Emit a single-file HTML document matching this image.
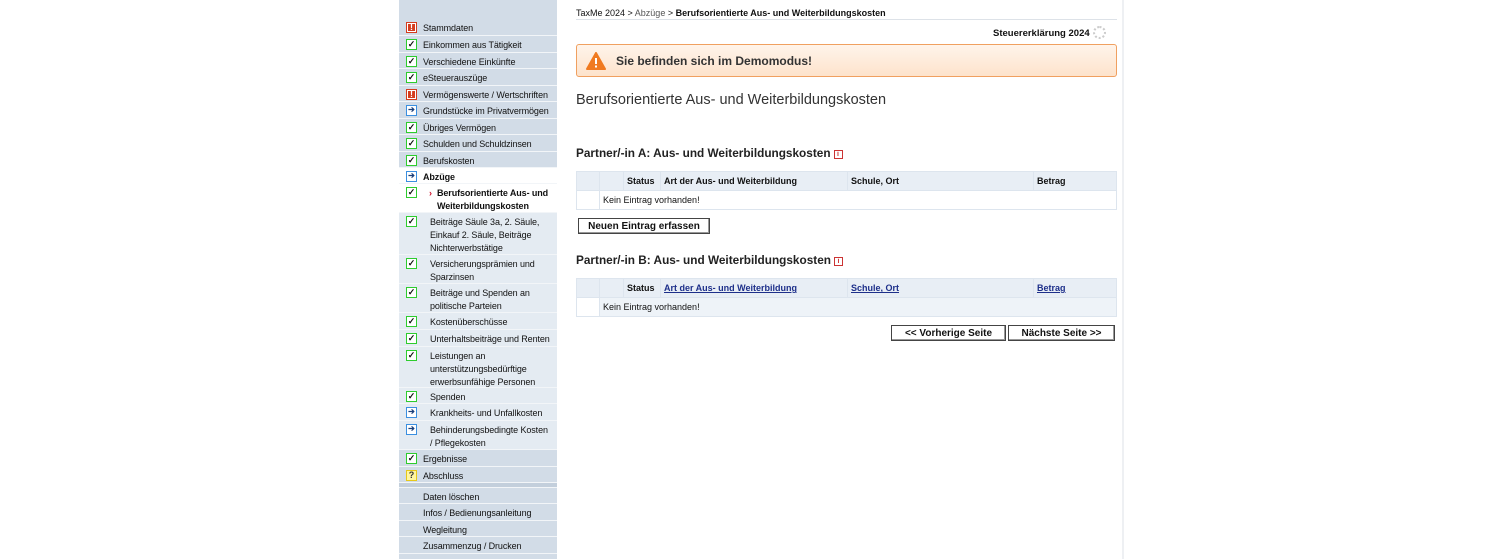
<!DOCTYPE html>
<html><head><meta charset="utf-8"><style>
*{margin:0;padding:0;box-sizing:border-box}
body{width:1505px;height:559px;background:#fff;font-family:"Liberation Sans",Arial,sans-serif;position:relative;overflow:hidden;color:#111}
#side{position:absolute;left:399px;top:0;width:158px;height:559px;background:#d2dce7}
.r{position:absolute;left:0;width:158px;font-size:9px;line-height:13px;border-bottom:1px solid #f2f5f8}
.r .t{position:absolute;left:24px;top:3px;white-space:nowrap;letter-spacing:-0.1px}
.s .t{left:31px}
.s{background:#e4ebf2}
.w{background:#fff}
.ic{position:absolute;left:7px;top:3px;width:11px;height:11px;border:1.5px solid;font-size:9px;line-height:8px;text-align:center;font-weight:bold;background:#fff}
.g{border-color:#2ecc2e;color:#111}
.e{border-color:#d43c1e;color:#fff;background:#d43c1e;box-shadow:inset 0 0 0 1px #fff}
.b{border-color:#3b8fe0;color:#1a3f7a;font-size:8px}
.y{border-color:#e6c81a;background:#fff6a0;color:#333}
#main{position:absolute;left:557px;top:0;width:567px;height:559px;border-right:2px solid #eef0f3}
.bc{position:absolute;left:19px;top:8px;font-size:9px}
.ln{position:absolute;left:19px;top:19px;width:541px;border-top:1px solid #dde2e8}
.h1{position:absolute;left:19px;top:92px;font-size:14.5px;color:#333}
.h2{position:absolute;left:19px;font-size:11.8px;font-weight:bold;color:#222}
.inf{display:inline-block;width:9px;height:9px;border:1px solid #c33;color:#c33;font-size:7px;line-height:7px;text-align:center;vertical-align:1px;margin-left:3px}
table{position:absolute;left:19px;width:541px;border-collapse:collapse;font-size:9px}
td{border:1px solid #dde5ee;height:19px;padding:0 3px}
tr.hd td{background:#e8eef5;font-weight:bold;height:19px}
a{color:#1d2f8a;text-decoration:underline}
.btn{position:absolute;height:16px;border:1px solid #444;box-shadow:inset -1px -1px #999;background:#fff;font-size:10px;font-weight:bold;text-align:center;line-height:15px}
</style></head><body>
<div id="side">
<div class="r" style="top:0;height:19px;border:0"></div>
<div class="r" style="top:19px;height:17px"><span class="ic e">!</span><span class="t">Stammdaten</span></div>
<div class="r" style="top:36px;height:17px"><span class="ic g">✓</span><span class="t">Einkommen aus Tätigkeit</span></div>
<div class="r" style="top:53px;height:16px"><span class="ic g">✓</span><span class="t">Verschiedene Einkünfte</span></div>
<div class="r" style="top:69px;height:17px"><span class="ic g">✓</span><span class="t">eSteuerauszüge</span></div>
<div class="r" style="top:86px;height:16px"><span class="ic e">!</span><span class="t">Vermögenswerte / Wertschriften</span></div>
<div class="r" style="top:102px;height:17px"><span class="ic b">➔</span><span class="t">Grundstücke im Privatvermögen</span></div>
<div class="r" style="top:119px;height:16px"><span class="ic g">✓</span><span class="t">Übriges Vermögen</span></div>
<div class="r" style="top:135px;height:17px"><span class="ic g">✓</span><span class="t">Schulden und Schuldzinsen</span></div>
<div class="r" style="top:152px;height:16px"><span class="ic g">✓</span><span class="t">Berufskosten</span></div>
<div class="r w" style="top:168px;height:16px"><span class="ic b">➔</span><span class="t" style="font-weight:bold">Abzüge</span></div>
<div class="r s w" style="top:184px;height:29px"><span class="ic g">✓</span><span class="t" style="font-weight:bold;padding-left:8px;left:30px"><span style="color:#d0102a;position:absolute;left:0">›</span>Berufsorientierte Aus- und<br>Weiterbildungskosten</span></div>
<div class="r s" style="top:213px;height:42px"><span class="ic g">✓</span><span class="t">Beiträge Säule 3a, 2. Säule,<br>Einkauf 2. Säule, Beiträge<br>Nichterwerbstätige</span></div>
<div class="r s" style="top:255px;height:29px"><span class="ic g">✓</span><span class="t">Versicherungsprämien und<br>Sparzinsen</span></div>
<div class="r s" style="top:284px;height:29px"><span class="ic g">✓</span><span class="t">Beiträge und Spenden an<br>politische Parteien</span></div>
<div class="r s" style="top:313px;height:17px"><span class="ic g">✓</span><span class="t">Kostenüberschüsse</span></div>
<div class="r s" style="top:330px;height:17px"><span class="ic g">✓</span><span class="t">Unterhaltsbeiträge und Renten</span></div>
<div class="r s" style="top:347px;height:41px"><span class="ic g">✓</span><span class="t">Leistungen an<br>unterstützungsbedürftige<br>erwerbsunfähige Personen</span></div>
<div class="r s" style="top:388px;height:16px"><span class="ic g">✓</span><span class="t">Spenden</span></div>
<div class="r s" style="top:404px;height:17px"><span class="ic b">➔</span><span class="t">Krankheits- und Unfallkosten</span></div>
<div class="r s" style="top:421px;height:29px"><span class="ic b">➔</span><span class="t">Behinderungsbedingte Kosten<br>/ Pflegekosten</span></div>
<div class="r" style="top:450px;height:17px"><span class="ic g">✓</span><span class="t">Ergebnisse</span></div>
<div class="r" style="top:467px;height:16px"><span class="ic y">?</span><span class="t">Abschluss</span></div>
<div class="r" style="top:483px;height:5px;background:#c3cfdc"></div>
<div class="r" style="top:488px;height:16px"><span class="t">Daten löschen</span></div>
<div class="r" style="top:504px;height:17px"><span class="t">Infos / Bedienungsanleitung</span></div>
<div class="r" style="top:521px;height:16px"><span class="t">Wegleitung</span></div>
<div class="r" style="top:537px;height:17px"><span class="t">Zusammenzug / Drucken</span></div>
</div>
<div id="main">
<div class="bc">TaxMe 2024 &gt; <span style="color:#555">Abzüge</span> &gt; <b>Berufsorientierte Aus- und Weiterbildungskosten</b></div>
<div class="ln"></div>
<div style="position:absolute;left:436px;top:28px;font-size:9.5px;font-weight:bold">Steuererklärung 2024</div>
<div style="position:absolute;left:536px;top:26px;width:13px;height:13px;border:2px dotted #ccc;border-radius:50%"></div>
<div style="position:absolute;left:19px;top:44px;width:541px;height:33px;border:1px solid #f0a060;border-radius:3px;background:linear-gradient(#fff4ea,#fde3cc)">
<svg style="position:absolute;left:9px;top:7px" width="20" height="18" viewBox="0 0 20 18"><path d="M10 1 L19 17 L1 17 Z" fill="#f07a20" stroke="#f07a20" stroke-linejoin="round" stroke-width="2"/><rect x="9" y="6" width="2" height="6" fill="#fff"/><rect x="9" y="13.5" width="2" height="2" fill="#fff"/></svg>
<span style="position:absolute;left:39px;top:9px;font-size:12px;font-weight:bold;color:#333">Sie befinden sich im Demomodus!</span></div>
<div class="h1">Berufsorientierte Aus- und Weiterbildungskosten</div>
<div class="h2" style="top:146px">Partner/-in A: Aus- und Weiterbildungskosten<span class="inf">i</span></div>
<table style="top:171px"><tr class="hd"><td style="width:23px"></td><td style="width:24px"></td><td style="width:37px">Status</td><td style="width:187px">Art der Aus- und Weiterbildung</td><td style="width:186px">Schule, Ort</td><td>Betrag</td></tr>
<tr><td></td><td colspan="5" style="border-left:1px solid #dde5ee">Kein Eintrag vorhanden!</td></tr></table>
<div class="btn" style="left:21px;top:218px;width:132px">Neuen Eintrag erfassen</div>
<div class="h2" style="top:253px">Partner/-in B: Aus- und Weiterbildungskosten<span class="inf">i</span></div>
<table style="top:278px"><tr class="hd"><td style="width:23px"></td><td style="width:24px"></td><td style="width:37px">Status</td><td style="width:187px"><a>Art der Aus- und Weiterbildung</a></td><td style="width:186px"><a>Schule, Ort</a></td><td><a>Betrag</a></td></tr>
<tr style="background:#eef3f8"><td style="background:#fff"></td><td colspan="5">Kein Eintrag vorhanden!</td></tr></table>
<div class="btn" style="left:334px;top:325px;width:115px">&lt;&lt; Vorherige Seite</div>
<div class="btn" style="left:451px;top:325px;width:107px">Nächste Seite &gt;&gt;</div>
</div>
</body></html>
